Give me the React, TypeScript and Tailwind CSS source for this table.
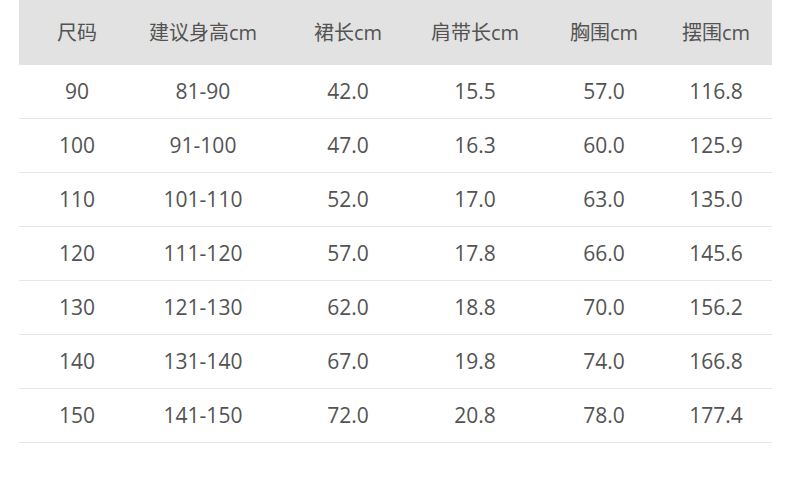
import React from 'react';

const HEADERS = ['尺码', '建议身高cm', '裙长cm', '肩带长cm', '胸围cm', '摆围cm'];

const ROWS = [
  ['90', '81-90', '42.0', '15.5', '57.0', '116.8'],
  ['100', '91-100', '47.0', '16.3', '60.0', '125.9'],
  ['110', '101-110', '52.0', '17.0', '63.0', '135.0'],
  ['120', '111-120', '57.0', '17.8', '66.0', '145.6'],
  ['130', '121-130', '62.0', '18.8', '70.0', '156.2'],
  ['140', '131-140', '67.0', '19.8', '74.0', '166.8'],
  ['150', '141-150', '72.0', '20.8', '78.0', '177.4'],
];

// column widths picked so each label sits centred where the chart has it
const COLS = 'grid grid-cols-[116px_136px_154px_100px_158px_66px_23px]';

export default function App() {
  return (
    <div
      className="h-[485px] w-[790px] bg-white pl-[19px] text-[#535353]"
      style={{ fontFamily: '"Open Sans", "Noto Sans CJK SC", sans-serif' }}
    >
      <div className="w-[753px]">
        <div className={`${COLS} h-[65px] items-center bg-[#e2e2e2] text-[20px]`}>
          {HEADERS.map((h) => (
            <div key={h} className="flex justify-center whitespace-nowrap">
              {h}
            </div>
          ))}
          <div />
        </div>
        {ROWS.map((r) => (
          <div key={r[0]} className={`${COLS} h-[54px] items-center border-b border-[#e6e6e6] text-[21px]`}>
            {r.map((v, i) => (
              <div key={i} className="flex justify-center whitespace-nowrap">
                {v}
              </div>
            ))}
            <div />
          </div>
        ))}
      </div>
    </div>
  );
}
